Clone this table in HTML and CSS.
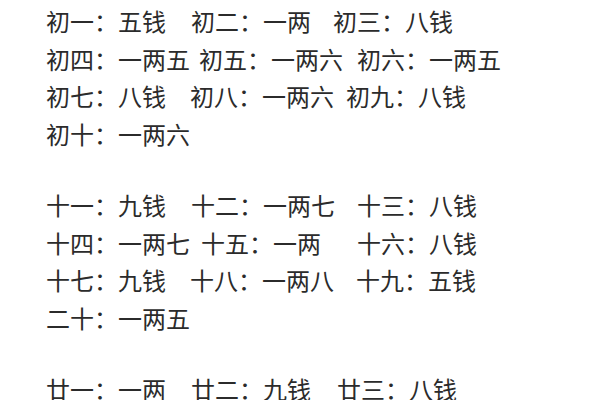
FILE: index.html
```html
<!DOCTYPE html>
<html lang="zh-CN">
<head>
<meta charset="utf-8">
<title>称骨</title>
<link rel="stylesheet" href="styles.css">
</head>
<body>
<div class="page">
  <div class="block">
    <div class="row"><span>初一：五钱</span><span class="g25">初二：一两</span><span class="g22">初三：八钱</span></div>
    <div class="row"><span>初四：一两五</span><span class="g9">初五：一两六</span><span class="g14">初六：一两五</span></div>
    <div class="row"><span>初七：八钱</span><span class="g24">初八：一两六</span><span class="g12">初九：八钱</span></div>
    <div class="row"><span>初十：一两六</span></div>
  </div>
  <div class="block">
    <div class="row"><span>十一：九钱</span><span class="g25">十二：一两七</span><span class="g22">十三：八钱</span></div>
    <div class="row"><span>十四：一两七</span><span class="g11">十五：一两</span><span class="g36">十六：八钱</span></div>
    <div class="row"><span>十七：九钱</span><span class="g24">十八：一两八</span><span class="g22">十九：五钱</span></div>
    <div class="row"><span>二十：一两五</span></div>
  </div>
  <div class="block">
    <div class="row"><span>廿一：一两</span><span class="g25">廿二：九钱</span><span class="g26">廿三：八钱</span></div>
  </div>
</div>
</body>
</html>
```
FILE: styles.css
```css
html, body {
  margin: 0;
  padding: 0;
  background: #ffffff;
}
.page {
  padding: 2px 0 0 46px;
  font-family: "Noto Sans CJK SC", "Microsoft YaHei", sans-serif;
  font-size: 24px;
  color: #2b2b2b;
  display: flex;
  flex-direction: column;
  gap: 34px;
}
.row {
  display: flex;
  line-height: 37.5px;
  height: 37.5px;
  white-space: nowrap;
}
.g9 { margin-left: 9px; }
.g11 { margin-left: 11px; }
.g12 { margin-left: 12px; }
.g14 { margin-left: 14px; }
.g22 { margin-left: 22px; }
.g24 { margin-left: 24px; }
.g25 { margin-left: 25px; }
.g26 { margin-left: 26px; }
.g36 { margin-left: 36px; }
```
